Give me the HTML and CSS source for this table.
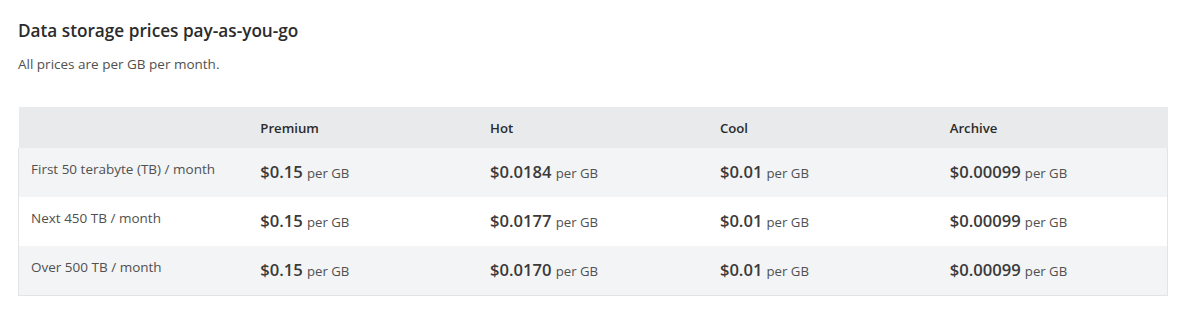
FILE: index.html
```html
<!DOCTYPE html>
<html>
<head>
<meta charset="utf-8">
<link rel="stylesheet" href="styles.css">
</head>
<body>
<div class="page">
  <h2 class="title">Data storage prices pay-as-you-go</h2>
  <p class="subtitle">All prices are per GB per month.</p>
  <table class="prices">
    <thead>
      <tr>
        <th></th>
        <th>Premium</th>
        <th>Hot</th>
        <th>Cool</th>
        <th>Archive</th>
      </tr>
    </thead>
    <tbody>
      <tr>
        <td class="label">First 50 terabyte (TB) / month</td>
        <td><span class="amt">$0.15</span> <span class="unit">per GB</span></td>
        <td><span class="amt">$0.0184</span> <span class="unit">per GB</span></td>
        <td><span class="amt">$0.01</span> <span class="unit">per GB</span></td>
        <td><span class="amt">$0.00099</span> <span class="unit">per GB</span></td>
      </tr>
      <tr>
        <td class="label">Next 450 TB / month</td>
        <td><span class="amt">$0.15</span> <span class="unit">per GB</span></td>
        <td><span class="amt">$0.0177</span> <span class="unit">per GB</span></td>
        <td><span class="amt">$0.01</span> <span class="unit">per GB</span></td>
        <td><span class="amt">$0.00099</span> <span class="unit">per GB</span></td>
      </tr>
      <tr>
        <td class="label">Over 500 TB / month</td>
        <td><span class="amt">$0.15</span> <span class="unit">per GB</span></td>
        <td><span class="amt">$0.0170</span> <span class="unit">per GB</span></td>
        <td><span class="amt">$0.01</span> <span class="unit">per GB</span></td>
        <td><span class="amt">$0.00099</span> <span class="unit">per GB</span></td>
      </tr>
    </tbody>
  </table>
</div>
</body>
</html>
```

FILE: styles.css
```css
html, body {
  margin: 0;
  padding: 0;
  background: #ffffff;
}

body {
  font-family: "Open Sans", "Noto Sans", sans-serif;
  color: #505050;
}

.page {
  padding: 18px 17px 0 18px;
}

.title {
  margin: 0;
  font-size: 17.2px;
  font-weight: 600;
  line-height: 26px;
  color: #2b2b2b;
}

.subtitle {
  margin: 11px 0 0 0;
  font-size: 13.5px;
  line-height: 18px;
  color: #505050;
}

.prices {
  margin-top: 34px;
  width: 1150px;
  border-collapse: collapse;
  table-layout: fixed;
}

.prices th,
.prices td {
  text-align: left;
  padding: 0 12px;
}

.prices th {
  height: 41px;
  background: #e9eaec;
  font-size: 13.2px;
  font-weight: 600;
  color: #2b2b2b;
}

.prices tbody tr {
  height: 49px;
}

.prices tbody tr:nth-child(odd) {
  background: #f3f4f5;
}

.prices tbody {
  border: 1px solid #e3e4e6;
  border-top: none;
}

.prices td {
  vertical-align: top;
  padding-top: 13px;
}

.prices td.label {
  font-size: 13.5px;
  line-height: 18px;
  padding-top: 12px;
  color: #505050;
}

.amt {
  font-size: 16.6px;
  font-weight: 600;
  color: #3a3a3a;
  line-height: 22px;
}

.unit {
  font-size: 13.2px;
  color: #505050;
}
```
